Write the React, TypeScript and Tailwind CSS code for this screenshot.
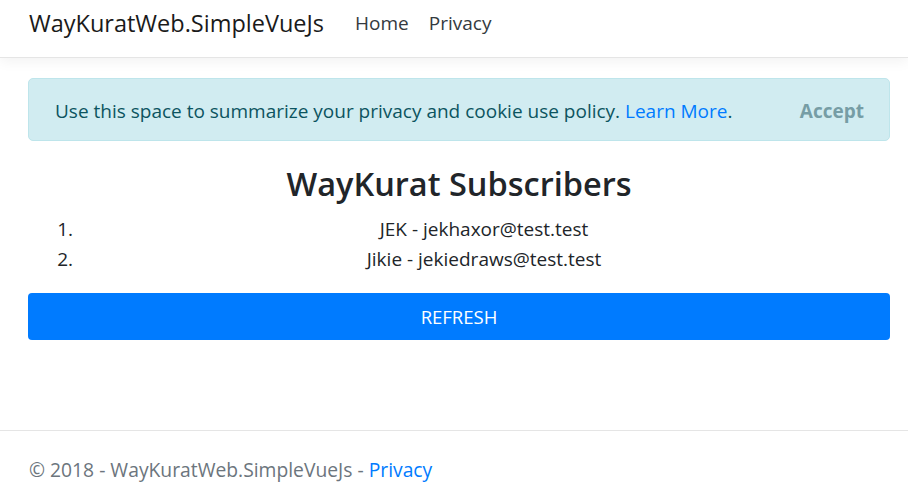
import type { JSX } from 'react';

const subscribers = [
  { name: 'JEK', email: 'jekhaxor@test.test' },
  { name: 'Jikie', email: 'jekiedraws@test.test' },
];

const Header = (): JSX.Element => (
  <header className="h-[58px] border-b border-[#e5e5e5] bg-white shadow-[0_4px_12px_rgba(0,0,0,0.05)]">
    <nav className="flex items-center px-[29px] pt-[6px] leading-[34px]">
      <a className="text-[23.5px] text-[#1a1a1a]" href="#">
        WayKuratWeb.SimpleVueJs
      </a>
      <ul className="ml-[31px] flex items-center gap-[20px] text-[19px] text-[#343a40]">
        <li>
          <a href="#">Home</a>
        </li>
        <li>
          <a href="#">Privacy</a>
        </li>
      </ul>
    </nav>
  </header>
);

const CookieConsent = (): JSX.Element => (
  <div className="mt-[20px] flex h-[63px] items-center justify-between rounded-[5px] border border-[#bee5eb] bg-[#d1ecf1] pl-[26px] pr-[25px] pt-[3px] text-[19px] text-[#0c5460]">
    <p>
      Use this space to summarize your privacy and cookie use policy.{' '}
      <a href="#" className="text-[#007bff]">
        Learn More
      </a>
      .
    </p>
    <button className="font-bold text-[#769da5]">Accept</button>
  </div>
);

export default function App(): JSX.Element {
  return (
    <div
      className="flex min-h-screen flex-col bg-white text-[#212529]"
      style={{ fontFamily: '"Open Sans", "Noto Sans", sans-serif' }}
    >
      <Header />
      <main className="pl-[28px] pr-[18px]">
        <CookieConsent />
        <h2 className="mt-[21px] text-center text-[32.5px] font-semibold leading-[43px] text-[#212529]">
          WayKurat Subscribers
        </h2>
        <ol className="mt-[9px] list-decimal pl-[50px] text-[19px] leading-[30px]">
          {subscribers.map((s) => (
            <li key={s.email} className="text-center">
              {s.name} - {s.email}
            </li>
          ))}
        </ol>
        <button className="mt-[19px] h-[47px] w-full rounded-[4px] bg-[#007bff] text-[18.5px] text-white">
          REFRESH
        </button>
      </main>
      <footer className="mt-auto h-[70px] border-t border-[#e5e5e5] px-[29px] pt-[26px] text-[19.3px] leading-[26px] text-[#6c757d]">
        © 2018 - WayKuratWeb.SimpleVueJs -{' '}
        <a href="#" className="text-[#007bff]">
          Privacy
        </a>
      </footer>
    </div>
  );
}
